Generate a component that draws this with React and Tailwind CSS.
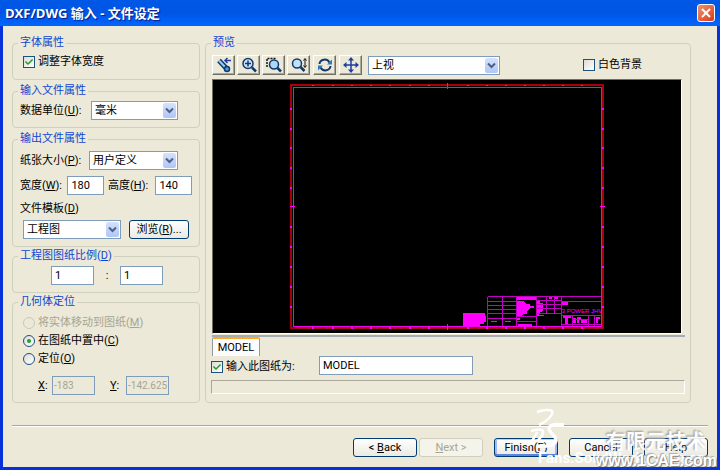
import React, { useState } from "react";
import { FaCheck } from "react-icons/fa";

const VIEWS = ["上视", "前视", "右视"];

const Group = ({ title, className = "", bodyClass = "", children }) => (
  <fieldset
    className={`min-w-0 rounded-[4px] border border-[#d0d0bf] ${className}`}
  >
    <legend className="ml-[5px] px-[2px] leading-4 text-[#0f46d0]">{title}</legend>
    <div className={bodyClass}>{children}</div>
  </fieldset>
);

const Select = ({ id, label, value, options, className = "" }) => (
  <div
    className={`relative h-[19px] shrink-0 border border-[#7f9db9] bg-white ${className}`}
  >
    <select
      id={id}
      aria-label={label}
      defaultValue={value}
      className="block h-[17px] w-full appearance-none bg-transparent pl-[3px] pr-4 leading-[17px] outline-none"
    >
      {options.map((option) => (
        <option key={option}>{option}</option>
      ))}
    </select>
    <span className="pointer-events-none absolute top-px right-px flex h-[15px] w-[13px] items-center justify-center rounded-[2px] bg-linear-to-b from-[#d5e1fd] to-[#b0c6f6]">
      <svg viewBox="0 0 9 7" className="h-[7px] w-[9px]">
        <path d="M1 1.5l3.5 3.5L8 1.5" fill="none" stroke="#4d6185" strokeWidth="2" />
      </svg>
    </span>
  </div>
);

const Field = ({ className = "px-[3px]", ...props }) => (
  <input
    type="text"
    className={`h-[19px] min-w-0 border border-[#7f9db9] bg-white outline-none disabled:bg-transparent disabled:text-[#a6a594] ${className}`}
    {...props}
  />
);

const Check = ({ id, checked, onChange, children }) => (
  <div className="flex h-4 items-center gap-[3px]">
    <span className="relative flex h-3 w-3">
      <input
        id={id}
        type="checkbox"
        checked={checked}
        onChange={onChange}
        className="h-3 w-3 appearance-none border border-[#1c5180] bg-linear-to-br from-[#dcdcd7] to-white"
      />
      {checked && (
        <FaCheck
          size={8}
          className="pointer-events-none absolute top-[2px] left-[2px] text-[#21a121]"
        />
      )}
    </span>
    <label htmlFor={id}>{children}</label>
  </div>
);

const Radio = ({ id, value, current, onPick, disabled, children }) => (
  <div className="flex h-[18px] items-center gap-[3px]">
    <span className="relative flex h-3 w-3">
      <input
        id={id}
        type="radio"
        name="position"
        checked={current === value}
        disabled={disabled}
        onChange={() => onPick(value)}
        className="h-3 w-3 appearance-none rounded-full border border-[#1c5180] bg-linear-to-br from-[#dcdcd7] to-white disabled:border-[#cac8bb] disabled:from-[#ece9d8] disabled:to-[#ece9d8]"
      />
      {current === value && (
        <span className="pointer-events-none absolute top-1 left-1 h-1 w-1 rounded-full bg-[#21a121]" />
      )}
    </span>
    <label htmlFor={id} className={disabled ? "text-[#a6a594]" : ""}>
      {children}
    </label>
  </div>
);

const Tool = ({ label, children }) => (
  <button
    type="button"
    aria-label={label}
    className="flex h-[20px] w-[23px] items-center justify-center border border-t-white border-r-[#716f64] border-b-[#716f64] border-l-white bg-[#ece9d8] shadow-[inset_-1px_-1px_0_#aca899]"
  >
    <svg viewBox="0 0 16 16" className="h-4 w-4" fill="none" stroke="#12386c" strokeWidth="1.5">
      {children}
    </svg>
  </button>
);

const PushButton = ({ primary, disabled, className = "", children }) => (
  <button
    type="button"
    disabled={disabled}
    className={`h-[19px] rounded-[3px] border border-[#003c74] bg-linear-to-b from-white to-[#ebe9e0] leading-[17px] disabled:border-[#d0cebf] disabled:from-[#f5f4ea] disabled:to-[#f5f4ea] disabled:text-[#a6a594] ${
      primary ? "shadow-[inset_0_-2px_0_#5c86dd,inset_0_1px_0_#b9d0fb,inset_2px_0_0_#9dbaf3,inset_-2px_0_0_#9dbaf3]" : ""
    } ${className}`}
  >
    {children}
  </button>
);

// drawing frame with its ticks and title block
const Sheet = () => (
  <svg viewBox="0 0 468 253" className="block h-[253px] w-full" shapeRendering="crispEdges">
    <g transform="translate(-213 -80)">
      <path d="M290 84h314v245H290zM292 86v241h310V86z" fill="#a8000c" fillRule="evenodd" />
      <path d="M293 87h309v240H293zM294 88v238h307V88z" fill="#f000f0" fillRule="evenodd" />
      <g fill="#f0f">
        {[312, 332, 351, 370, 389, 409, 428, 467, 486, 505, 524, 543, 562, 581].map((x) => (
          <g key={x}>
            <rect x={x} y="85" width="2" height="1" />
            <rect x={x} y="327" width="2" height="2" />
          </g>
        ))}
        {[108, 128, 147, 167, 187, 226, 246, 266, 286, 306].map((y) => (
          <g key={y}>
            <rect x="290" y={y} width="2" height="2" />
            <rect x="602" y={y} width="2" height="2" />
          </g>
        ))}
        <rect x="447" y="83" width="1" height="6" />
        <rect x="447" y="324" width="1" height="6" />
        <rect x="290" y="206" width="5" height="1" />
        <rect x="600" y="206" width="5" height="1" />
        <path d="M463 313h22v3h1v6h-2v2h-4v2h-17z" />
        <path d="M516 297h21v3h-21zM516 301h8l2 3h4v4l-3 3v3h-4l-2 3h-5zM530 306h4v2h-4zM516 318h4v2h-4zM518 324h14v2h-14z" />
        <path d="M537 301h3v2h3v8l-4 2v2h5v1h-7zM549 297h3v2h-3zM555 297h3v2h-3zM561 302h7v3h-7z" />
        <path d="M491 321h6v1h-6zM505 321h6v1h-6zM563 316h8v2h-3v6h-3v-6h-2zM573 318h3v5h-3zM577 317h4v2h-2v4h-2zM581 320h6v3h-6zM596 317h4v2h-2v4h-2zM565 324h8v1h-8zM579 324h7v1h-7zM590 324h10v1h-10z" />
      </g>
      <path
        d="M487.5 296.5H601M487.5 296.5V326M502.5 297V326M516.5 297V326M536.5 297V326M561.5 297V326M487 301.5H516M487 305.5H516M487 309.5H516M487 313.5H516M487 318.5H516M537 300.5H561M537 304.5H561M537 308.5H561M537 313.5H561M546.5 297V314M554.5 297V314M561 301.5H601M561 315.5H601M561 324.5H601M516 316.5H537M516 321.5H537M572.5 316V326M588.5 316V326M594.5 316V326M572 319.5H588"
        fill="none"
        stroke="#c400c4"
      />
      <text
        x="582"
        y="313"
        textAnchor="middle"
        fill="#f0f"
        className="font-['Liberation_Sans_Narrow','Liberation_Sans',sans-serif] text-[6px]"
      >
        3 POWER JHV
      </text>
    </g>
  </svg>
);

const App = () => {
  const [fitWidth, setFitWidth] = useState(true);
  const [whiteBg, setWhiteBg] = useState(false);
  const [importSheet, setImportSheet] = useState(true);
  const [position, setPosition] = useState("center");

  return (
    <div className="relative flex min-h-screen flex-col overflow-hidden bg-[#0831d9] font-[Roboto,'Noto_Sans_CJK_SC',sans-serif] text-[11px] leading-4 text-black">
      <header className="flex h-[26px] items-center justify-between bg-linear-to-b from-[#0058e6] via-[#0055e5] to-[#0066ff] px-[5px]">
        <h1 className="font-['Open_Sans','Noto_Sans_CJK_SC',sans-serif] text-[13px] font-bold text-white [text-shadow:1px_1px_1px_#0a1883]">
          DXF/DWG 输入 - 文件设定
        </h1>
        <button
          type="button"
          aria-label="关闭"
          className="flex h-[18px] w-[18px] items-center justify-center rounded-[3px] border border-white bg-linear-to-br from-[#f0906c] to-[#d8350c]"
        >
          <svg viewBox="0 0 10 10" className="h-[10px] w-[10px]">
            <path d="M1 1l8 8M9 1l-8 8" stroke="#fff" strokeWidth="2" />
          </svg>
        </button>
      </header>

      <main className="mx-[3px] mb-[3px] flex grow flex-col bg-[#ece9d8] px-[9px] pt-[9px]">
        <div className="flex gap-[5px] pr-[17px]">
          <div className="flex w-[188px] shrink-0 flex-col">
            <Group title="字体属性" className="mb-[3px]" bodyClass="px-[10px] pt-[3px] pb-[9px]">
              <Check id="fit" checked={fitWidth} onChange={() => setFitWidth(!fitWidth)}>
                调整字体宽度
              </Check>
            </Group>

            <Group title="输入文件属性" className="mb-[3px]" bodyClass="px-[7px] pt-[2px] pb-[7px]">
              <div className="flex items-center">
                <label htmlFor="unit" className="w-[71px]">
                  数据单位(<u>U</u>):
                </label>
                <Select id="unit" value="毫米" options={["毫米", "厘米", "英寸"]} className="w-[87px]" />
              </div>
            </Group>

            <Group title="输出文件属性" className="mb-px" bodyClass="px-[7px] pt-[4px] pb-[7px]">
              <div className="flex items-center">
                <label htmlFor="paper" className="w-[69px]">
                  纸张大小(<u>P</u>):
                </label>
                <Select id="paper" value="用户定义" options={["用户定义", "A4", "A3"]} className="w-[89px]" />
              </div>
              <div className="mt-[6px] flex items-center">
                <label htmlFor="width" className="w-[48px]">
                  宽度(<u>W</u>):
                </label>
                <Field id="width" defaultValue="180" className="w-[37px] px-[3px]" />
                <label htmlFor="height" className="ml-[4px] w-[48px]">
                  高度(<u>H</u>):
                </label>
                <Field id="height" defaultValue="140" className="w-[37px] px-[3px]" />
              </div>
              <label htmlFor="template" className="mt-[6px] block">
                文件模板(<u>D</u>)
              </label>
              <div className="mt-[3px] flex items-center gap-[8px] pl-[3px]">
                <Select id="template" value="工程图" options={["工程图", "零件"]} className="w-[98px]" />
                <PushButton className="w-[60px]">
                  浏览(<u>R</u>)...
                </PushButton>
              </div>
            </Group>

            <Group
              title={<>工程图图纸比例(<u>D</u>)</>}
              className="mb-px"
              bodyClass="flex items-center pt-[2px] pr-[7px] pb-[7px] pl-[38px]"
            >
              <Field aria-label="图纸比例" defaultValue="1" className="w-[43px] px-[3px]" />
              <span className="w-[26px] text-center">:</span>
              <Field aria-label="实体比例" defaultValue="1" className="w-[43px] px-[3px]" />
            </Group>

            <Group title="几何体定位" bodyClass="px-[10px] pt-[4px] pb-[7px]">
              <Radio id="move" value="move" current={position} onPick={setPosition} disabled>
                将实体移动到图纸(<u>M</u>)
              </Radio>
              <Radio id="center" value="center" current={position} onPick={setPosition}>
                在图纸中置中(<u>C</u>)
              </Radio>
              <Radio id="locate" value="locate" current={position} onPick={setPosition}>
                定位(<u>O</u>)
              </Radio>
              <div className="mt-[8px] flex items-center pl-[15px]">
                <label htmlFor="x" className="w-[14px]">
                  <u>X</u>:
                </label>
                <Field id="x" disabled defaultValue="-183" className="w-[43px] px-px text-[10px]" />
                <label htmlFor="y" className="ml-[15px] w-[16px]">
                  <u>Y</u>:
                </label>
                <Field id="y" disabled defaultValue="-142.625" className="w-[43px] px-px text-[10px]" />
              </div>
            </Group>
          </div>

          <Group title="预览" className="grow" bodyClass="px-[5px] pt-[4px] pb-[8px]">
            <div className="flex items-center pl-px">
              <div className="flex gap-[2px]">
                <Tool label="上一视图">
                  <path d="M3 3.5l7.5 8" stroke="#12386c" strokeWidth="5" />
                  <path d="M3 3.5l7 7.5" stroke="#8fd0f8" strokeWidth="2" />
                  <circle cx="11" cy="12" r="2.5" fill="#4ca3e8" />
                  <path d="M9 3.5h6M11.5 1L9 3.5 11.5 6" stroke="#1d3fa0" />
                </Tool>
                <Tool label="整屏显示">
                  <circle cx="7" cy="6.5" r="5" fill="#cfe5f7" />
                  <path d="M11 10.5l4 4" strokeWidth="2.5" />
                  <path d="M7 3.5v6M4 6.5h6" />
                </Tool>
                <Tool label="局部放大">
                  <path d="M1 10V1.5h9" stroke="#111" strokeDasharray="2 1" />
                  <circle cx="8" cy="7.5" r="4.5" fill="#a9d8f8" />
                  <path d="M11.5 11l3.5 3.5" strokeWidth="2.5" />
                </Tool>
                <Tool label="放大缩小">
                  <circle cx="6" cy="6.5" r="4.5" fill="#bfe2fa" />
                  <path d="M9.5 10l4 4" strokeWidth="2.5" />
                  <path d="M14 2v8M12.5 3.5L14 1.5l1.500 2M12.5 8.5l1.500 2 1.500-2" stroke="#111" strokeWidth="1" />
                </Tool>
              </div>
              <div className="ml-[3px] flex gap-[3px]">
                <Tool label="旋转视图">
                  <path d="M2.5 7C3 2 10 1 12.5 5.5" strokeWidth="2" />
                  <path d="M13.5 9C13 14 6 15 3.5 10.5" strokeWidth="2" />
                  <path d="M15 2.5v5h-5zM1 13.5v-5h5z" fill="#2b7bc0" stroke="none" />
                </Tool>
                <Tool label="平移">
                  <path d="M8 2v12M2 8h12" stroke="#1d3fa0" />
                  <path d="M8 0l3 3.5H5zM8 16l3-3.500H5zM0 8l3.500-3v6zM16 8l-3.500-3v6z" fill="#1d3fa0" stroke="none" />
                </Tool>
              </div>
              <Select label="视图" value="上视" options={VIEWS} className="ml-[6px] w-[132px]" />
              <div className="mr-[43px] ml-auto">
                <Check id="white" checked={whiteBg} onChange={() => setWhiteBg(!whiteBg)}>
                  白色背景
                </Check>
              </div>
            </div>

            <div className="mt-[4px] mr-[3px] ml-px border border-t-[#716f64] border-r-white border-b-white border-l-[#716f64]">
              <div className={whiteBg ? "bg-white" : "bg-black"}>
                <Sheet />
              </div>
            </div>

            <div className="mt-px ml-px border-t-2 border-[#a5acb2]">
              <button
                type="button"
                className="block h-[19px] w-[48px] rounded-t-[2px] border border-t-2 border-b-0 border-[#919b9c] border-t-[#ffa928] bg-[#fcfcfe] leading-[17px]"
              >
                MODEL
              </button>
            </div>

            <div className="flex items-end">
              <div className="w-[108px] shrink-0">
                <Check id="sheet" checked={importSheet} onChange={() => setImportSheet(!importSheet)}>
                  输入此图纸为:
                </Check>
              </div>
              <Field aria-label="图纸名称" defaultValue="MODEL" className="w-[154px] px-[3px]" />
            </div>
            <div className="mt-[5px] h-[14px] border border-t-[#aca899] border-r-white border-b-white border-l-[#aca899]" />
          </Group>
        </div>

        <hr className="mt-[22px] h-[2px] border-t border-b border-t-[#aca899] border-b-white" />

        <footer className="mt-[11px] flex justify-end gap-[11px] pb-[8px]">
          <div className="flex gap-[2px]">
            <PushButton className="w-[64px]">
              &lt; <u>B</u>ack
            </PushButton>
            <PushButton disabled className="w-[64px]">
              <u>N</u>ext &gt;
            </PushButton>
          </div>
          <PushButton primary className="w-[64px]">
            Finish(<u>F</u>)
          </PushButton>
          <PushButton className="w-[64px]">Cancel</PushButton>
          <PushButton className="w-[64px]">Help</PushButton>
        </footer>
      </main>

      <div className="pointer-events-none absolute right-0 bottom-0 h-[64px] w-[192px] font-bold text-white">
        <svg viewBox="0 0 40 42" className="absolute top-[2px] left-0 h-[42px] w-[40px]" fill="none" stroke="#fff">
          <path d="M9 4c5-2 13-3 15-1 2 3-5 11-13 14" strokeWidth="2.5" />
          <path d="M36 17c-8-1-14 0-15 3-1 4 8 8 7 13-1 4-9 6-19 5" strokeWidth="3.5" />
          <path d="M3 23c7-2 13-2 12 2-1 5-8 10-15 12 4-4 8-9 9-13" strokeWidth="2.5" />
        </svg>
        <span className="absolute top-[44px] left-[10px] text-[15px] leading-4 whitespace-nowrap">
          Fans.SolidWorks.com.cn
        </span>
        <span className="absolute top-[24px] right-[14px] text-[20px] leading-6 whitespace-nowrap opacity-90 [text-shadow:-1px_-1px_2px_#888]">
          有限元技术
        </span>
        <span className="absolute right-[3px] bottom-px font-['Liberation_Sans',sans-serif] text-[16px] leading-4 whitespace-nowrap [text-shadow:1px_1px_1px_#777,-1px_-1px_1px_#aaa]">
          www.1CAE.com
        </span>
      </div>
    </div>
  );
};

export default App;
